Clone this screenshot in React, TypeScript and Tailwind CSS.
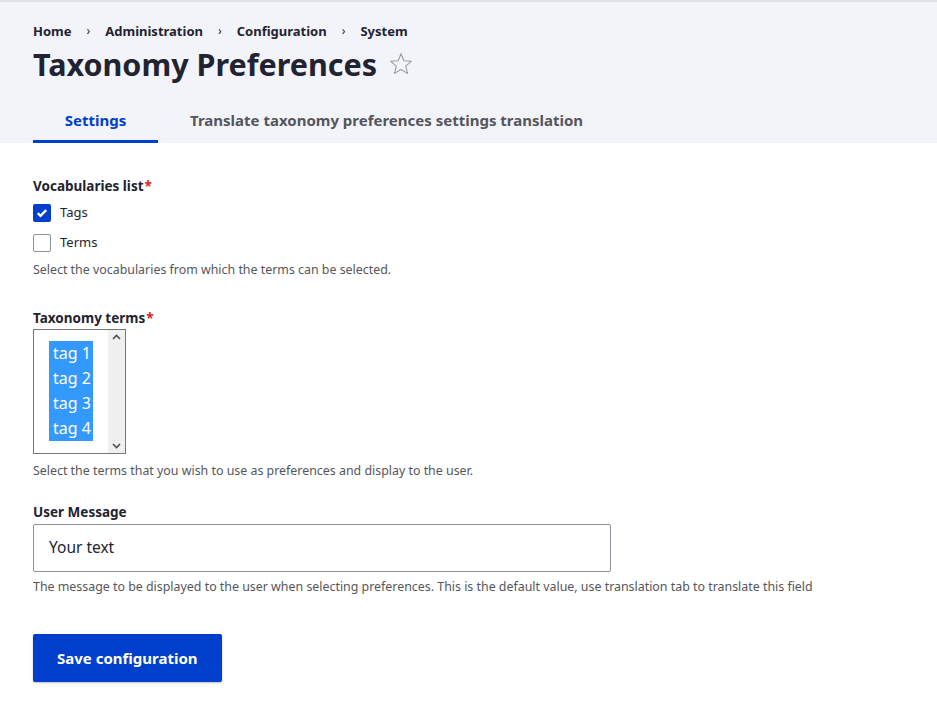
const font = { fontFamily: '"Noto Sans", "Open Sans", sans-serif' };

function Checkbox({ checked, label }: { checked?: boolean; label: string }) {
    return (
        <div className="flex items-center h-[30px]">
            {checked ? (
                <span className="flex items-center justify-center w-[18px] h-[18px] rounded-[2px] bg-[#003ecc]">
                    <svg width="12" height="12" viewBox="0 0 12 12" fill="none"><path d="M1.8 6.2l2.7 2.6L10.2 3.2" stroke="#fff" strokeWidth="2.5" /></svg>
                </span>
            ) : (
                <span className="w-[18px] h-[18px] rounded-[2px] border border-[#8e929c] bg-white" />
            )}
            <span className="ml-[9px] text-[13px] text-[#222330]">{label}</span>
        </div>
    );
}

function Label({ text, required }: { text: string; required?: boolean }) {
    return (
        <div className="text-[13.5px] font-bold text-[#222330] leading-[18px]">
            {text}
            {required && <span className="text-[#dc2323] ml-[1px]">*</span>}
        </div>
    );
}

function Desc({ children }: { children: string }) {
    return <div className="text-[12.4px] text-[#55565b] leading-[16px]">{children}</div>;
}

export default function App() {
    return (
        <div className="min-h-[708px] bg-white" style={font}>
            <div className="bg-[#f3f4f9] border-t-2 border-[#e0e1e6] px-[33px]">
                <nav className="flex items-center pt-[20px] text-[13px] font-bold text-[#222330] leading-[18px]">
                    <span>Home</span>
                    <span className="mx-[15px] font-normal text-[12px]">›</span>
                    <span>Administration</span>
                    <span className="mx-[15px] font-normal text-[12px]">›</span>
                    <span>Configuration</span>
                    <span className="mx-[15px] font-normal text-[12px]">›</span>
                    <span>System</span>
                </nav>
                <div className="flex items-center mt-[4px]">
                    <h1 className="text-[30.5px] font-bold text-[#222330] leading-[40px]">Taxonomy Preferences</h1>
                    <svg className="ml-[12px]" width="24" height="24" viewBox="0 0 24 24" fill="none">
                        <path d="M12 1.8l2.9 6.9 7.4.6-5.6 4.8 1.8 7.3L12 17.5l-6.5 3.9 1.8-7.3-5.6-4.8 7.4-.6z" stroke="#9a9ba3" strokeWidth="1.1" strokeLinejoin="round" />
                    </svg>
                </div>
                <div className="flex mt-[17px] text-[15px] font-bold leading-[20px]">
                    <div className="w-[125px] text-center text-[#003ecc] pt-[9px] pb-[10px] border-b-[3px] border-[#003ecc]">Settings</div>
                    <div className="ml-[32px] text-[#55565b] pt-[9px] pb-[10px]">Translate taxonomy preferences settings translation</div>
                </div>
            </div>

            <div className="px-[33px] pt-[34px]">
                <Label text="Vocabularies list" required />
                <div className="mt-[3px]">
                    <Checkbox checked label="Tags" />
                    <Checkbox label="Terms" />
                </div>
                <div className="mt-[4px]"><Desc>Select the vocabularies from which the terms can be selected.</Desc></div>

                <div className="mt-[31px]"><Label text="Taxonomy terms" required /></div>
                <div className="mt-[2px] flex w-[93px] h-[125px] border border-[#767676] bg-white">
                    <div className="flex-1 pt-[11px] pl-[15px]">
                        <div className="w-[44px] bg-[#3399ff] text-white text-[16px] leading-[25px] pl-[4px]">
                            <div>tag 1</div>
                            <div>tag 2</div>
                            <div>tag 3</div>
                            <div>tag 4</div>
                        </div>
                    </div>
                    <div className="w-[17px] bg-[#f0f0f0] flex flex-col justify-between items-center py-[4px]">
                        <svg width="9" height="6" viewBox="0 0 9 6"><path d="M1 5l3.5-3.5L8 5" stroke="#505050" strokeWidth="1.6" fill="none" /></svg>
                        <svg width="9" height="6" viewBox="0 0 9 6"><path d="M1 1l3.5 3.5L8 1" stroke="#505050" strokeWidth="1.6" fill="none" /></svg>
                    </div>
                </div>
                <div className="mt-[9px]"><Desc>Select the terms that you wish to use as preferences and display to the user.</Desc></div>

                <div className="mt-[24px]"><Label text="User Message" /></div>
                <div className="mt-[3px] w-[578px] h-[48px] border border-[#8e929c] rounded-[2px] flex items-center px-[15px] text-[15.5px] text-[#222330]">Your text</div>
                <div className="mt-[7px]"><Desc>The message to be displayed to the user when selecting preferences. This is the default value, use translation tab to translate this field</Desc></div>

                <button className="mt-[39px] h-[48px] px-[24px] bg-[#003ecc] text-white text-[15px] font-bold rounded-[2px] shadow-[0_1px_2px_rgba(0,0,0,0.25)]">Save configuration</button>
            </div>
        </div>
    );
}
